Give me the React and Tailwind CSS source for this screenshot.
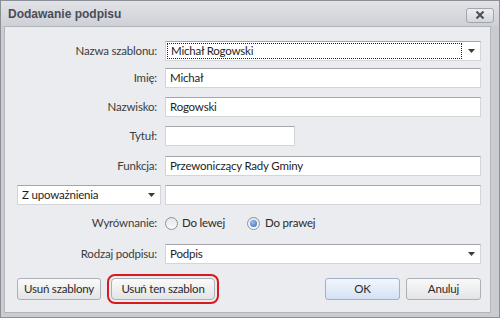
const font = { fontFamily: 'Lato, "Liberation Sans", Arial, sans-serif' }
const titleFont = { fontFamily: '"Liberation Sans", Arial, sans-serif' }

function Arrow() {
  return (
    <svg width="7" height="4" viewBox="0 0 7 4" className="shrink-0">
      <path d="M0 0h7L3.5 4z" fill="#3a3a3a" />
    </svg>
  )
}

function Field({ value = '', className = 'flex-1' }) {
  return (
    <div className={`${className} h-[20px] bg-white border border-[#d3d5d9] border-t-[#a4a6aa] flex items-center px-[4px] text-[#1e1e1e]`}>
      {value}
    </div>
  )
}

function Row({ label, children }) {
  return (
    <div className="flex items-center">
      <div className="w-[141px] text-right pr-[1px] text-[#3c3c3c]">{label}</div>
      <div className="ml-[7px] flex-1 flex">{children}</div>
    </div>
  )
}

function Button({ children, className = '', primary = false }) {
  return (
    <div
      className={`h-[22px] flex items-center justify-center rounded-[3px] border text-[#2a2a2a] ${
        primary
          ? 'border-[#9fb0c8] bg-gradient-to-b from-[#f2f6fc] to-[#d5e2f4]'
          : 'border-[#adb0b5] bg-gradient-to-b from-[#fafafa] to-[#e3e4e6]'
      } ${className}`}
    >
      {children}
    </div>
  )
}

function Radio({ checked }) {
  return (
    <div className="w-[13px] h-[13px] rounded-full border border-[#8e9299] bg-gradient-to-b from-[#e4e5e8] to-[#fbfbfb] flex items-center justify-center">
      {checked && <div className="w-[7px] h-[7px] rounded-full bg-[radial-gradient(circle_at_40%_35%,#9cc2f0,#2f63b8)]" />}
    </div>
  )
}

export default function App() {
  return (
    <div style={font} className="w-[500px] h-[318px] text-[11.5px] tracking-[-0.2px] border border-[#8c8f96] bg-[#c9ccd1] flex flex-col">
      <div className="h-[25px] shrink-0 flex items-center justify-between pl-[7px] pr-[5px] bg-gradient-to-b from-[#e2e3e7] to-[#cdd0d5]">
        <span style={titleFont} className="font-bold text-[12px] tracking-normal text-[#4a4c59]">Dodawanie podpisu</span>
        <div className="w-[28px] h-[15px] mt-[3px] rounded-[3px] border border-[#a2a5ab] bg-gradient-to-b from-[#eceef1] to-[#d3d6db] flex items-center justify-center">
          <svg width="10" height="8" viewBox="0 0 10 8">
            <path d="M1.5 0.5L8.5 7.5M8.5 0.5L1.5 7.5" stroke="#4a4c55" strokeWidth="2" />
          </svg>
        </div>
      </div>
      <div className="flex-1 ml-[3px] mr-[8px] mb-[4px] border border-[#b2b5bb] bg-[#ebecef] pl-[12px] pr-[9px] pt-[14px] flex flex-col">
        <Row label="Nazwa szablonu:">
          <div className="flex-1 h-[20px] bg-white border border-[#d3d5d9] border-t-[#a4a6aa] flex items-center">
            <div className="flex-1 h-[16px] ml-[1px] border border-dotted border-[#222] flex items-center px-[3px] text-[#1e1e1e]">
              Michał Rogowski
            </div>
            <div className="w-[18px] flex justify-center"><Arrow /></div>
          </div>
        </Row>
        <div className="mt-[7px]"><Row label="Imię:"><Field value="Michał" /></Row></div>
        <div className="mt-[9px]"><Row label="Nazwisko:"><Field value="Rogowski" /></Row></div>
        <div className="mt-[9px]"><Row label="Tytuł:"><Field className="w-[130px]" /></Row></div>
        <div className="mt-[10px]"><Row label="Funkcja:"><Field value="Przewoniczący Rady Gminy" /></Row></div>
        <div className="mt-[9px] flex items-center">
          <div className="w-[144px] h-[20px] bg-white border border-[#d3d5d9] border-t-[#a4a6aa] flex items-center pl-[4px] pr-[5px] text-[#1e1e1e]">
            <span className="flex-1">Z upoważnienia</span>
            <Arrow />
          </div>
          <div className="ml-[4px] flex-1 flex"><Field /></div>
        </div>
        <div className="mt-[8px] h-[20px]">
          <Row label="Wyrównanie:">
            <div className="flex items-center h-[20px] text-[#2a2a2a]">
              <Radio />
              <span className="ml-[4px]">Do lewej</span>
              <div className="ml-[22px]"><Radio checked /></div>
              <span className="ml-[5px]">Do prawej</span>
            </div>
          </Row>
        </div>
        <div className="mt-[11px]">
          <Row label="Rodzaj podpisu:">
            <div className="flex-1 h-[20px] bg-white border border-[#d3d5d9] border-t-[#a4a6aa] flex items-center pl-[4px] pr-[5px] text-[#1e1e1e]">
              <span className="flex-1">Podpis</span>
              <Arrow />
            </div>
          </Row>
        </div>
        <div className="mt-[14px] flex items-center">
          <Button className="w-[84px]">Usuń szablony</Button>
          <Button className="w-[104px] ml-[10px] outline-2 outline-offset-[2px] outline-[#d71920] rounded-[4px]">Usuń ten szablon</Button>
          <div className="flex-1" />
          <Button primary className="w-[75px]">OK</Button>
          <Button className="w-[75px] ml-[6px]">Anuluj</Button>
        </div>
      </div>
    </div>
  )
}
